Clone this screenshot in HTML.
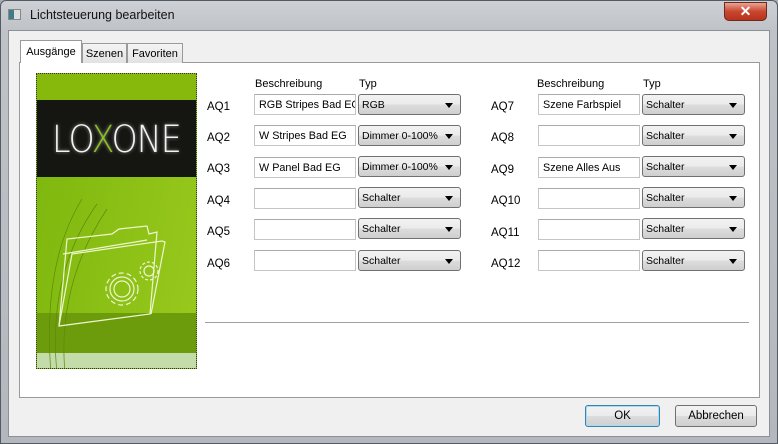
<!DOCTYPE html>
<html><head><style>
*{margin:0;padding:0;box-sizing:border-box}
body{width:778px;height:444px;overflow:hidden;background:#a9adb3;font-family:"Liberation Sans",sans-serif;font-size:11px;color:#000;position:relative}
.frame{position:absolute;left:0;top:0;width:778px;height:444px;border-radius:6px 6px 0 0;background:linear-gradient(180deg,#cdd1d6 0,#bfc3c8 30px,#b4b8be 100%);border:1px solid #555b63}
.title{position:absolute;left:30px;top:8px;font-size:12.5px;color:#111}
.ticon{position:absolute;left:8px;top:9px;width:13px;height:11px;background:linear-gradient(90deg,#3d7d8a 0 45%,#ddd 45%);border:1px solid #888}
.close{position:absolute;left:724px;top:2px;width:43px;height:19px;border-radius:0 0 5px 5px;background:linear-gradient(180deg,#e8a495,#c9462f 50%,#b8321c);border:1px solid #6b2a20;color:#fff;font-weight:bold;text-align:center;font-size:14px;line-height:17px}
.client{position:absolute;left:8px;top:30px;width:762px;height:407px;background:#f0f0f0;border:1px solid #8a9098}
.pane{position:absolute;left:19px;top:62px;width:741px;height:336px;background:#fff;border:1px solid #9a9a9a}
.tab{position:absolute;top:43px;height:20px;border:1px solid #9a9a9a;border-bottom:none;background:linear-gradient(#f4f4f4,#e2e2e2);padding:4px 0 0;text-align:center;font-size:11px}
.tab.a{top:40px;height:23px;background:#fff;z-index:2;padding-top:5px}
.img{position:absolute;left:36px;top:73px;width:161px;height:296px;background:#8dc21a;border:1px dotted #333}
.lbl{position:absolute;font-size:11.5px}
.in{position:absolute;width:102px;height:21px;border:1px solid #c5c5c5;border-top-color:#aaa;background:#fff;padding:4px 4px;font-size:10.8px;white-space:nowrap;overflow:hidden}
.cb{position:absolute;width:103px;height:21px;border:1px solid #707070;border-radius:3px;background:linear-gradient(#f2f2f2,#ebebeb 50%,#dddddd 50%,#cfcfcf);padding:4px 3px;font-size:10.5px;white-space:nowrap}
.cb:after{content:"";position:absolute;right:7px;top:8px;border-left:4px solid transparent;border-right:4px solid transparent;border-top:5px solid #000}
.btn{position:absolute;height:22px;border:1px solid #707070;border-radius:3px;background:linear-gradient(#f2f2f2,#ebebeb 50%,#dddddd 50%,#cfcfcf);text-align:center;line-height:20px;font-size:11.5px}
</style></head><body>
<div class="frame"></div>
<div class="ticon"></div>
<div class="title">Lichtsteuerung bearbeiten</div>
<div class="close">✕</div>
<div class="client"></div>
<div class="pane"></div>
<div class="tab a" style="left:20px;width:62px">Ausgänge</div>
<div class="tab" style="left:82px;width:45px">Szenen</div>
<div class="tab" style="left:127px;width:56px">Favoriten</div>
<div class="img">
 <div style="position:absolute;left:0;top:0;width:159px;height:26px;background:#86b90c"></div>
 <div style="position:absolute;left:0;top:26px;width:159px;height:77px;background:#151512"></div>
 <div style="position:absolute;left:0;top:103px;width:159px;height:136px;background:linear-gradient(100deg,#7fb80f,#98c81c)"></div>
 <div style="position:absolute;left:0;top:239px;width:159px;height:40px;background:#6c9b0b"></div>
 <div style="position:absolute;left:0;top:279px;width:159px;height:15px;background:#c3dcaa"></div>
 <div style="position:absolute;left:15px;top:44px;font-size:37px;color:#f2f2f2;letter-spacing:-1px;transform:scaleX(0.9);transform-origin:left;text-shadow:0 0 4px #999;font-family:'DejaVu Sans ExtraLight','DejaVu Sans',sans-serif;font-weight:200">LO<span style="color:#8dc21a">X</span>ONE</div>
 <svg style="position:absolute;left:0;top:100px" width="159" height="194" fill="none" stroke="#eef6cf" stroke-width="1.2">
  <path d="M20 200 Q10 100 60 30 M28 200 Q20 110 70 35 M14 200 Q5 90 45 25" stroke="#5d8a08" stroke-width="0.7"/>
  <path d="M22 152 L30 65 L75 60 L82 55 L110 52 L112 60 L120 58 L113 140 Z"/>
  <path d="M22 152 L35 80 L125 67 L128 68 L114 140"/>
  <path d="M26 80 L110 66"/>
  <circle cx="85" cy="115" r="12"/><circle cx="85" cy="115" r="8"/>
  <circle cx="85" cy="115" r="16" stroke-dasharray="5 3"/>
  <circle cx="112" cy="97" r="5"/><circle cx="112" cy="97" r="9" stroke-dasharray="3 2"/>
 </svg>
</div>
<div class="lbl" style="left:255px;top:78px;font-size:11px">Beschreibung</div>
<div class="lbl" style="left:359px;top:78px;font-size:11px">Typ</div>
<div class="lbl" style="left:537px;top:78px;font-size:11px">Beschreibung</div>
<div class="lbl" style="left:643px;top:78px;font-size:11px">Typ</div>

<div class="lbl" style="left:207px;top:101px">AQ1</div><div class="in" style="left:254px;top:94px">RGB Stripes Bad EG</div><div class="cb" style="left:358px;top:94px">RGB</div>
<div class="lbl" style="left:207px;top:132px">AQ2</div><div class="in" style="left:254px;top:125px">W Stripes Bad EG</div><div class="cb" style="left:358px;top:125px">Dimmer 0-100%</div>
<div class="lbl" style="left:207px;top:163px">AQ3</div><div class="in" style="left:254px;top:157px">W Panel Bad EG</div><div class="cb" style="left:358px;top:156px">Dimmer 0-100%</div>
<div class="lbl" style="left:207px;top:195px">AQ4</div><div class="in" style="left:254px;top:188px"></div><div class="cb" style="left:358px;top:187px">Schalter</div>
<div class="lbl" style="left:207px;top:226px">AQ5</div><div class="in" style="left:254px;top:219px"></div><div class="cb" style="left:358px;top:218px">Schalter</div>
<div class="lbl" style="left:207px;top:258px">AQ6</div><div class="in" style="left:254px;top:250px"></div><div class="cb" style="left:358px;top:250px">Schalter</div>

<div class="lbl" style="left:491px;top:101px">AQ7</div><div class="in" style="left:538px;top:94px">Szene Farbspiel</div><div class="cb" style="left:642px;top:94px">Schalter</div>
<div class="lbl" style="left:491px;top:132px">AQ8</div><div class="in" style="left:538px;top:125px"></div><div class="cb" style="left:642px;top:125px">Schalter</div>
<div class="lbl" style="left:491px;top:164px">AQ9</div><div class="in" style="left:538px;top:157px">Szene Alles Aus</div><div class="cb" style="left:642px;top:156px">Schalter</div>
<div class="lbl" style="left:491px;top:195px">AQ10</div><div class="in" style="left:538px;top:188px"></div><div class="cb" style="left:642px;top:187px">Schalter</div>
<div class="lbl" style="left:491px;top:227px">AQ11</div><div class="in" style="left:538px;top:219px"></div><div class="cb" style="left:642px;top:218px">Schalter</div>
<div class="lbl" style="left:491px;top:258px">AQ12</div><div class="in" style="left:538px;top:250px"></div><div class="cb" style="left:642px;top:250px">Schalter</div>

<div style="position:absolute;left:205px;top:322px;width:544px;height:1px;background:#a0a0a0"></div>
<div class="btn" style="left:585px;top:405px;width:75px;border-color:#3c7fb1;box-shadow:inset 0 0 0 1px #a8dcf5">OK</div>
<div class="btn" style="left:675px;top:405px;width:82px">Abbrechen</div>
</body></html>
